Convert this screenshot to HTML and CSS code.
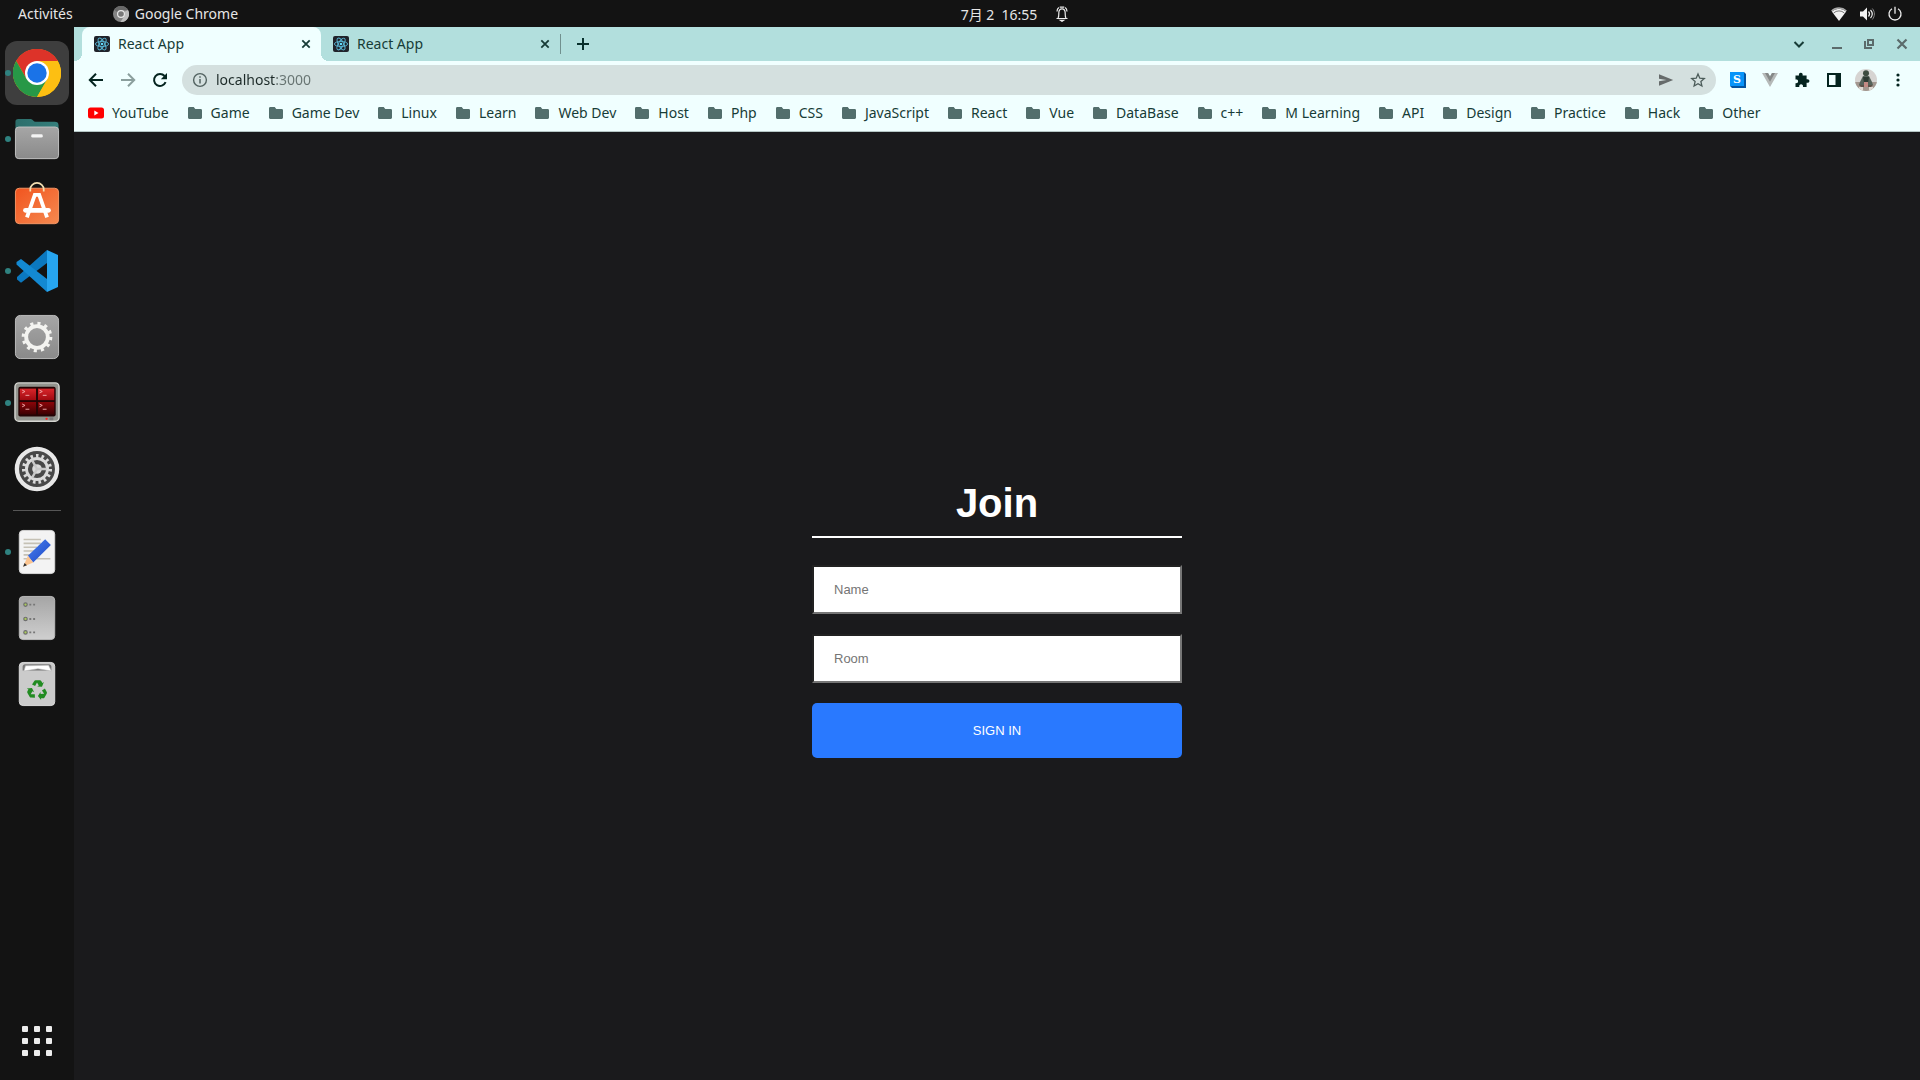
FILE: index.html
```html
<!DOCTYPE html>
<html lang="fr">
<head>
<meta charset="utf-8">
<title>React App</title>
<link rel="stylesheet" href="styles.css">
</head>
<body>
<svg class="defs" aria-hidden="true">
  <defs>
    <linearGradient id="metal" x1="0" y1="0" x2="0" y2="1"><stop offset="0" stop-color="#a6a6a6"/><stop offset="1" stop-color="#8a8a8a"/></linearGradient>
    <linearGradient id="silver" x1="0" y1="0" x2="0" y2="1"><stop offset="0" stop-color="#a5a5a5"/><stop offset="1" stop-color="#cfcfcf"/></linearGradient>
    <linearGradient id="teal" x1="0" y1="0" x2="1" y2="0"><stop offset="0" stop-color="#2c6e6b"/><stop offset="1" stop-color="#357f7c"/></linearGradient>
    <linearGradient id="orange" x1="0" y1="0" x2="1" y2="1"><stop offset="0" stop-color="#f1541f"/><stop offset="1" stop-color="#f58a50"/></linearGradient>
    <linearGradient id="red" x1="0" y1="0" x2="0" y2="1"><stop offset="0" stop-color="#d9262b"/><stop offset="1" stop-color="#a00a10"/></linearGradient>
    <linearGradient id="red-dark" x1="0" y1="0" x2="0" y2="1"><stop offset="0" stop-color="#8c0509"/><stop offset="1" stop-color="#3c0002"/></linearGradient>
    <linearGradient id="pencil" x1="0" y1="0" x2="1" y2="1"><stop offset="0" stop-color="#4a80f0"/><stop offset="1" stop-color="#1c48c4"/></linearGradient>
  </defs>
  <symbol id="react" viewBox="0 0 16 16">
    <rect width="16" height="16" rx="2" fill="#20232a"/>
    <g fill="none" stroke="#5ab8d6" stroke-width=".9"><ellipse cx="8" cy="8" rx="6.6" ry="2.6"/><ellipse cx="8" cy="8" rx="6.6" ry="2.6" transform="rotate(60 8 8)"/><ellipse cx="8" cy="8" rx="6.6" ry="2.6" transform="rotate(120 8 8)"/></g>
    <circle cx="8" cy="8" r="1.3" fill="#61dafb"/>
  </symbol>
  <symbol id="cross" viewBox="0 0 16 16"><path d="M4.3 4.3l7.4 7.4M11.7 4.3l-7.4 7.4" fill="none" stroke="currentColor" stroke-width="1.8"/></symbol>
  <symbol id="folder" viewBox="0 0 16 16"><path d="M1 3.5C1 2.7 1.5 2 2.3 2h4.4l1.6 2h5.4c.8 0 1.3.6 1.3 1.400v7.200c0 .8-.5 1.400-1.300 1.400H2.300C1.500 14 1 13.400 1 12.600z" fill="#526e6c"/></symbol>
</svg>

<header class="topbar">
  <div class="topbar-left">
    <button class="plain" type="button">Activités</button>
    <button class="plain app-name" type="button">
      <svg width="16" height="16" viewBox="0 0 16 16"><circle cx="8" cy="8" r="8" fill="#858585"/><path d="M8 0a8 8 0 0 1 7 4H8a4 4 0 0 0-3.600 2.200L1.200 3.800A8 8 0 0 1 8 0z" fill="#696969"/><path d="M15 4a8 8 0 0 1-7.500 12l3.800-6a4 4 0 0 0 .2-4.200z" fill="#bdbdbd"/><circle cx="8" cy="8" r="4" fill="#e8e8e8"/><circle cx="8" cy="8" r="2.800" fill="#777"/></svg>
      Google Chrome
    </button>
  </div>
  <button class="plain clock" type="button">
    <time>7月 2&nbsp; 16:55</time>
    <svg width="16" height="16" viewBox="0 0 16 16" fill="none" stroke="#eee" stroke-width="1.200"><path d="M2.500 12.500h11M4 12c1-1.200.8-3 .8-5C4.800 4.500 6 2.800 8 2.800S11.200 4.500 11.200 7c0 2-.2 3.800.8 5"/><path d="M4.800 1.500C3.500 2.500 3 4 3 5.500M11.200 1.500C12.500 2.500 13 4 13 5.500M5.700 1.200h4.600"/><path d="M6.500 14.300h3l-1.500 1z" fill="#eee"/></svg>
  </button>
  <div class="topbar-right">
    <svg width="16" height="16" viewBox="0 0 16 16"><path d="M8 15L.8 5.600a10.500 10.500 0 0 1 14.400 0z" fill="#f2f2f2"/><path d="M.6 4.900a10.800 10.800 0 0 1 14.800 0" fill="none" stroke="#aaa" stroke-width="1.400"/><path d="M2.600 7a8 8 0 0 1 10.800 0" fill="none" stroke="#222" stroke-width=".6"/></svg>
    <svg width="16" height="16" viewBox="0 0 16 16" fill="none" stroke="#eee"><path d="M1 5.500h3L8 1.500v13l-4-4H1z" fill="#f2f2f2" stroke="none"/><path d="M9.500 5.500c1.300 1.500 1.300 3.500 0 5M11.500 4c2.200 2.500 2.200 5.500 0 8" stroke-width="1.200"/><path d="M13.300 2.500c2.800 3.300 2.800 7.700 0 11" stroke="#888"/></svg>
    <svg width="16" height="16" viewBox="0 0 16 16" fill="none" stroke="#eee" stroke-width="1.300"><path d="M5 2.800a6 6 0 1 0 6 0M8 .8v7"/></svg>
  </div>
</header>

<div class="desktop">
  <nav class="dock" aria-label="Dock">
    <button class="dock-item running active" type="button" aria-label="Google Chrome">
      <svg width="48" height="48" viewBox="0 0 48 48"><circle cx="24" cy="24" r="24" fill="#fbbc05"/><path d="M24 24L3.200 12A24 24 0 0 1 44.800 12z" fill="#dd3329"/><path d="M24 12h20.800A24 24 0 0 0 3.200 12l10.400 18z" fill="#dd3329"/><path d="M3.200 12A24 24 0 0 0 24 48l10.400-18H13.600z" fill="#279847"/><path d="M24 48A24 24 0 0 0 44.800 12H24l10.400 18z" fill="#fdbf12"/><circle cx="24" cy="24" r="12" fill="#fff"/><circle cx="24" cy="24" r="9.700" fill="#1a73e8"/></svg>
    </button>
    <button class="dock-item running" type="button" aria-label="Fichiers">
      <svg width="46" height="46" viewBox="0 0 48 48"><path d="M1.500 12V6c0-2 1-3 3-3h13c2 0 3 3 5 3h20c2.500 0 4 1 4 4v8h-45z" fill="url(#teal)"/><rect x="1.500" y="11.500" width="45" height="33" rx="3.500" fill="url(#metal)" stroke="#c3c3c3"/><rect x="18" y="19" width="12" height="3.500" rx="1.500" fill="#f4f4f4"/></svg>
    </button>
    <button class="dock-item" type="button" aria-label="Ubuntu Software">
      <svg width="46" height="46" viewBox="0 1 48 48"><rect x="1.500" y="7.500" width="45" height="37" rx="4" fill="url(#orange)" stroke="#f79665"/><path d="M17 11V8.500a7 6.500 0 0 1 14 0V11" fill="none" stroke="#f4dfb2" stroke-width="1.800"/><path d="M13.500 38L21.700 14.500h4.600l8.200 23.500" fill="none" stroke="#fff" stroke-width="4"/><rect x="9.500" y="28" width="29" height="5" rx="2.500" fill="#fff"/></svg>
    </button>
    <button class="dock-item running" type="button" aria-label="Visual Studio Code">
      <svg width="48" height="48" viewBox="0 0 48 48"><path d="M34 3L4 30v2.500l4 3.200L34 16z" fill="#0b78bf"/><path d="M34 45L3.500 17.500V15L8 12l26 20z" fill="#1389d2"/><path d="M34 3l11 5v32l-11 5z" fill="#27a5ef"/></svg>
    </button>
    <button class="dock-item" type="button" aria-label="Paramètres">
      <svg width="46" height="46" viewBox="0 0 48 48"><rect x="1.500" y="1.500" width="45" height="45" rx="5" fill="url(#metal)" stroke="#bdbdbd"/><circle cx="24" cy="24" r="11.300" fill="none" stroke="#f3f3f0" stroke-width="4"/><circle cx="24" cy="24" r="14" fill="none" stroke="#f3f3f0" stroke-width="4" stroke-dasharray="3.200 4.130"/></svg>
    </button>
    <button class="dock-item running" type="button" aria-label="Terminator">
      <svg width="46" height="46" viewBox="0 1 48 48"><rect x="1" y="4" width="46" height="40" rx="4" fill="#92948e" stroke="#d5d6d1" stroke-width="1.500"/><rect x="4.500" y="8" width="39" height="31" rx="2" fill="#240405"/><g fill="url(#red)"><rect x="6" y="10" width="17" height="12"/><rect x="25" y="10" width="17" height="12"/></g><g fill="url(#red-dark)"><rect x="6" y="24" width="17" height="13"/><rect x="25" y="24" width="17" height="13"/></g><path d="M8.500 11.500l3 1.500-3 1.500M12 17h4M26.500 11.500l3 1.500-3 1.500M30 17h4M8.500 26l3 1.500-3 1.500M12 31.500h4M26.500 26l3 1.500-3 1.500M30 31.500h4" fill="none" stroke="#f0a8a8"/><circle cx="34" cy="41.500" r="1.200" fill="#f22"/><rect x="37" y="40" width="4" height="3" fill="#777"/></svg>
    </button>
    <button class="dock-item" type="button" aria-label="Configuration">
      <svg width="46" height="46" viewBox="0 0 48 48"><circle cx="24" cy="24" r="21" fill="#484848" stroke="#e8e8e8" stroke-width="4.500"/><circle cx="24" cy="24" r="11" fill="none" stroke="#dadada" stroke-width="3"/><circle cx="24" cy="24" r="13.700" fill="none" stroke="#dadada" stroke-width="4" stroke-dasharray="2.600 3.137"/><circle cx="24" cy="24" r="5" fill="#dadada"/><path d="M24 24h10M24 24l-5-9M24 24l-5 9" stroke="#c8c8c8" stroke-width="2.500"/></svg>
    </button>
    <hr class="dock-rule">
    <button class="dock-item running" type="button" aria-label="Éditeur de texte">
      <svg width="46" height="46" viewBox="0 0 48 48"><rect x="5.500" y="1.500" width="37" height="45" rx="4" fill="#f3f3f3" stroke="#d8d8d8"/><path d="M10 11h18M10 15h18M10 19h14M10 23h13M10 27h10M10 31h28" stroke="#c5c1b5" stroke-width="1.600"/><path d="M14.500 28L32.500 10.800l6 6L20 35z" fill="url(#pencil)"/><path d="M14.500 28l5.500 7-10.500 4.500z" fill="#fbc490"/><path d="M11 35.500l2.500 2.300-4 1.700z" fill="#333"/></svg>
    </button>
    <button class="dock-item" type="button" aria-label="Serveur">
      <svg width="46" height="46" viewBox="0 0 48 48"><rect x="5.500" y="1.500" width="37" height="45" rx="4" fill="url(#silver)" stroke="#bbb"/><g fill="#aacb5a" stroke="#6e6e6e" stroke-width="1.200"><circle cx="12" cy="10" r="1.800"/><circle cx="12" cy="25" r="1.800"/><circle cx="12" cy="39" r="1.800"/></g><path d="M16 10h2m2 0h2M16 25h2m2 0h2M16 39h2m2 0h2" stroke="#777" stroke-width="2"/></svg>
    </button>
    <button class="dock-item" type="button" aria-label="Corbeille">
      <svg width="46" height="46" viewBox="0 0 48 48"><rect x="5.500" y="1.500" width="37" height="45" rx="4" fill="#cbcbcb" stroke="#ddd"/><path d="M9 10V6c0-1.500 1-2.500 2.500-2.500h25C38 3.500 39 4.500 39 6v4z" fill="#777"/><path d="M10.500 10.500l1.500-5.500 24-.5 3 6-14-2.500z" fill="#fff" stroke="#bbb" stroke-width=".6"/><g fill="#218b21"><g id="arm"><path d="M18.800 24.500l2.200-3.500c.4-.6.800-.8 1.500-.8h4.500c.7 0 1.200.3 1.600 1l1 1.700 1.600-1-2 5-5-.2 1.700-1.100-1.900-3.200-2 3.800z"/></g><use href="#arm" transform="rotate(120 24.300 30.500)"/><use href="#arm" transform="rotate(240 24.300 30.500)"/></g></svg>
    </button>
    <button class="dock-item dock-apps" type="button" aria-label="Afficher les applications">
      <svg width="48" height="48" viewBox="0 0 48 48" fill="#ededed"><g id="row"><rect x="9" y="9" width="6" height="6" rx="1"/><rect x="21" y="9" width="6" height="6" rx="1"/><rect x="33" y="9" width="6" height="6" rx="1"/></g><use href="#row" y="12"/><use href="#row" y="24"/></svg>
    </button>
  </nav>

  <div class="window">
    <div class="tabstrip">
      <div class="tab selected"><svg width="16" height="16"><use href="#react"/></svg><span class="tab-title">React App</span><button class="plain" type="button" aria-label="Fermer"><svg width="16" height="16"><use href="#cross"/></svg></button></div>
      <div class="tab"><svg width="16" height="16"><use href="#react"/></svg><span class="tab-title">React App</span><button class="plain" type="button" aria-label="Fermer"><svg width="16" height="16"><use href="#cross"/></svg></button></div>
      <button class="plain new-tab" type="button" aria-label="Nouvel onglet"><svg width="16" height="16" viewBox="0 0 16 16"><path d="M8 2v12M2 8h12" stroke="#08302c" stroke-width="2"/></svg></button>
      <div class="window-controls">
        <button class="plain dark" type="button" aria-label="Rechercher dans les onglets"><svg width="16" height="16" viewBox="0 0 16 16"><path d="M3.500 6L8 10.500 12.500 6" fill="none" stroke="currentColor" stroke-width="2"/></svg></button>
        <button class="plain" type="button" aria-label="Réduire"><svg width="16" height="16" viewBox="0 0 16 16"><path d="M2 12h10" stroke="currentColor" stroke-width="2"/></svg></button>
        <button class="plain" type="button" aria-label="Restaurer"><svg width="16" height="16" viewBox="0 0 16 16"><path d="M6 4h5v5H6zM3 5v7h7" fill="none" stroke="currentColor" stroke-width="2"/></svg></button>
        <button class="plain" type="button" aria-label="Fermer la fenêtre"><svg width="16" height="16" viewBox="0 0 16 16"><path d="M3.500 3.500l9 9M12.500 3.500l-9 9" stroke="currentColor" stroke-width="2.200"/></svg></button>
      </div>
    </div>

    <div class="toolbar">
      <div class="tools">
        <button class="plain" type="button" aria-label="Précédent"><svg width="16" height="16" viewBox="0 0 16 16"><path d="M15 8H2.500M8 1.800L1.800 8 8 14.200" fill="none" stroke="#04241f" stroke-width="2"/></svg></button>
        <button class="plain" type="button" aria-label="Suivant"><svg width="16" height="16" viewBox="0 0 16 16"><path d="M1 8h12.500M8 1.800L14.200 8 8 14.200" fill="none" stroke="#8b9f9d" stroke-width="2"/></svg></button>
        <button class="plain" type="button" aria-label="Actualiser"><svg width="16" height="16" viewBox="0 0 16 16"><path d="M13.600 10.200A6 6 0 1 1 12.600 4" fill="none" stroke="#04241f" stroke-width="2"/><path d="M15 1v6.200H8.800z" fill="#04241f"/></svg></button>
      </div>
      <div class="omnibox">
        <svg width="16" height="16" viewBox="0 0 16 16"><circle cx="8" cy="8" r="6.400" fill="none" stroke="#526260" stroke-width="1.400"/><path d="M8 7v4.500M8 4.300v1.500" stroke="#526260" stroke-width="1.500"/></svg>
        <input class="url" type="text" value="localhost:3000" aria-label="Adresse">
        <button class="plain" type="button" aria-label="Partager"><svg width="16" height="16" viewBox="0 0 16 16"><path d="M1 2.200L15.200 8 1 13.800V9.200L8.500 8 1 6.800z" fill="#666b6b"/></svg></button>
        <button class="plain" type="button" aria-label="Ajouter aux favoris"><svg width="16" height="16" viewBox="0 0 16 16"><path d="M8 2l1.800 4.200 4.500.4-3.400 3 1 4.400L8 11.700 4.100 14l1-4.400-3.400-3 4.500-.4z" fill="none" stroke="#4b5b59" stroke-width="1.300"/></svg></button>
      </div>
      <div class="tools">
        <button class="plain" type="button" aria-label="Extension S"><svg width="16" height="16" viewBox="0 0 16 16"><path d="M2 2l12-2 2 2v14H2l-2-2z" fill="#0454a0"/><path d="M0 0h14v14H0z" fill="#0894f9"/><text class="badge-letter" x="7" y="11" text-anchor="middle">S</text></svg></button>
        <button class="plain" type="button" aria-label="Vue.js devtools"><svg width="16" height="16" viewBox="0 0 16 16"><path d="M0 1h6l2 3.400L10 1h6L8 15z" fill="#b5b9b8"/><path d="M3 1h3l2 3.400L10 1h3L8 9.800z" fill="#858988"/></svg></button>
        <button class="plain" type="button" aria-label="Extensions"><svg width="16" height="16" viewBox="0 0 16 16"><path d="M1.500 3.500H5C4.600 1.800 5.400.8 6.800.8S9 1.800 8.600 3.500h4v3.800c1.800-.4 2.800.4 2.800 1.700s-1 2.100-2.800 1.700V15H9c.3-1.800-.6-2.700-1.900-2.700S5 13.200 5.300 15H1.500v-3.800c1.800.2 2.600-.6 2.600-1.900S3.300 7.300 1.500 7.500z" fill="#04241f"/></svg></button>
        <button class="plain" type="button" aria-label="Panneau latéral"><svg width="16" height="16" viewBox="0 0 16 16"><path d="M1 1h14v14H1zM3 3v10h6.500V3z" fill="#04241f" fill-rule="evenodd"/></svg></button>
        <button class="plain" type="button" aria-label="Profil"><svg class="avatar" width="22" height="22" viewBox="0 0 22 22"><rect width="22" height="22" fill="#d6d4d2"/><path d="M0 13h22v9H0z" fill="#a2978f"/><circle cx="11" cy="4.300" r="3" fill="#3e4c40"/><path d="M8 7h6l3 6 1 3H4l1-3z" fill="#56625a"/><path d="M8 8h6l-1 6H9z" fill="#2e3b33"/><path d="M4 16h14l-2 2H6z" fill="#5b5148"/><path d="M9 13h4v5H9z" fill="#c38a84"/><path d="M4 18h4v4H4zM14 18h4v4h-4z" fill="#ded8d2"/></svg></button>
        <button class="plain" type="button" aria-label="Menu"><svg width="16" height="16" viewBox="0 0 16 16" fill="#04241f"><circle cx="8" cy="3" r="1.600"/><circle cx="8" cy="8" r="1.600"/><circle cx="8" cy="13" r="1.600"/></svg></button>
      </div>
    </div>

    <nav class="bookmarks" aria-label="Favoris">
      <a href="#"><svg width="16" height="16" viewBox="0 0 16 16"><rect y="2.500" width="16" height="11" rx="2.500" fill="#f00"/><path d="M6.300 5.600v4.800L10.500 8z" fill="#fff"/></svg>YouTube</a>
      <a href="#"><svg width="16" height="16"><use href="#folder"/></svg>Game</a>
      <a href="#"><svg width="16" height="16"><use href="#folder"/></svg>Game Dev</a>
      <a href="#"><svg width="16" height="16"><use href="#folder"/></svg>Linux</a>
      <a href="#"><svg width="16" height="16"><use href="#folder"/></svg>Learn</a>
      <a href="#"><svg width="16" height="16"><use href="#folder"/></svg>Web Dev</a>
      <a href="#"><svg width="16" height="16"><use href="#folder"/></svg>Host</a>
      <a href="#"><svg width="16" height="16"><use href="#folder"/></svg>Php</a>
      <a href="#"><svg width="16" height="16"><use href="#folder"/></svg>CSS</a>
      <a href="#"><svg width="16" height="16"><use href="#folder"/></svg>JavaScript</a>
      <a href="#"><svg width="16" height="16"><use href="#folder"/></svg>React</a>
      <a href="#"><svg width="16" height="16"><use href="#folder"/></svg>Vue</a>
      <a href="#"><svg width="16" height="16"><use href="#folder"/></svg>DataBase</a>
      <a href="#"><svg width="16" height="16"><use href="#folder"/></svg>c++</a>
      <a href="#"><svg width="16" height="16"><use href="#folder"/></svg>M Learning</a>
      <a href="#"><svg width="16" height="16"><use href="#folder"/></svg>API</a>
      <a href="#"><svg width="16" height="16"><use href="#folder"/></svg>Design</a>
      <a href="#"><svg width="16" height="16"><use href="#folder"/></svg>Practice</a>
      <a href="#"><svg width="16" height="16"><use href="#folder"/></svg>Hack</a>
      <a href="#"><svg width="16" height="16"><use href="#folder"/></svg>Other</a>
    </nav>

    <main class="page">
      <form class="join">
        <h1>Join</h1>
        <input type="text" placeholder="Name" aria-label="Name">
        <input type="text" placeholder="Room" aria-label="Room">
        <button type="submit">SIGN IN</button>
      </form>
    </main>
  </div>
</div>
</body>
</html>
```
FILE: styles.css
```css
* {
  box-sizing: border-box;
}

body {
  margin: 0;
  min-height: 100vh;
  display: flex;
  flex-direction: column;
  background: #131313;
  font: 14px/20px "Noto Sans", "Noto Sans CJK JP", sans-serif;
}

svg {
  display: block;
  flex: none;
}

.defs {
  position: absolute;
  width: 0;
  height: 0;
}

.plain {
  display: flex;
  align-items: center;
  justify-content: center;
  padding: 0;
  border: 0;
  background: none;
  color: inherit;
  font: inherit;
}

/* System bar */
.topbar {
  display: grid;
  grid-template-columns: 1fr auto 1fr;
  align-items: center;
  height: 27px;
  padding: 0 17px 0 18px;
  color: #e6e6e6;
}

.topbar-left {
  display: flex;
  gap: 40px;
}

.app-name {
  gap: 6px;
}

.clock {
  gap: 17px;
  padding-left: 110px;
}

.clock time {
  padding-top: 2px;
}

.topbar-right {
  display: flex;
  justify-content: flex-end;
  gap: 12px;
}

.desktop {
  flex: 1;
  display: flex;
}

/* Dock */
.dock {
  width: 74px;
  flex: none;
  display: flex;
  flex-direction: column;
  align-items: center;
  gap: 2px;
  padding: 14px 5px 7px;
}

.dock-item {
  position: relative;
  display: flex;
  align-items: center;
  justify-content: center;
  width: 64px;
  height: 64px;
  padding: 0;
  border: 0;
  border-radius: 12px;
  background: none;
}

.dock-item.active {
  background: #3e3e3e;
}

.dock-item.running::before {
  content: "";
  position: absolute;
  left: 0;
  width: 6px;
  height: 6px;
  border-radius: 50%;
  background: #2f8280;
}

.dock-rule {
  width: 48px;
  height: 1px;
  margin: 7px 0;
  border: 0;
  background: #565656;
}

.dock-apps {
  margin-top: auto;
}

/* Browser window */
.window {
  flex: 1;
  min-width: 0;
  display: flex;
  flex-direction: column;
  background: #f0ffff;
  color: #173c37;
}

.tabstrip {
  display: flex;
  height: 34px;
  padding: 0 10px 0 8px;
  background: #b2dfdd;
}

.tab {
  position: relative;
  display: flex;
  align-items: center;
  gap: 8px;
  width: 239px;
  padding: 0 7px 0 12px;
}

.tab-title {
  flex: 1;
}

.tab.selected {
  border-radius: 8px 8px 0 0;
  background: #f0ffff;
}

.tab.selected::before,
.tab.selected::after {
  content: "";
  position: absolute;
  bottom: 0;
  width: 8px;
  height: 8px;
}

.tab.selected::before {
  right: 100%;
  background: radial-gradient(circle at 0 0, #b2dfdd 8px, #f0ffff 8px);
}

.tab.selected::after {
  left: 100%;
  background: radial-gradient(circle at 100% 0, #b2dfdd 8px, #f0ffff 8px);
}

.new-tab {
  align-self: center;
  height: 20px;
  padding-left: 14px;
  border-left: 1px solid #71908e;
}

.window-controls {
  display: flex;
  gap: 16px;
  margin-left: auto;
  color: #5b6b6b;
}

.window-controls .dark {
  margin-right: 7px;
  color: #173c37;
}

.toolbar {
  display: flex;
  align-items: center;
  gap: 6px;
  padding: 4px 6px 0;
}

.tools {
  display: flex;
}

.tools .plain {
  width: 32px;
  height: 30px;
}

.badge-letter {
  fill: #fff;
  font: bold 11px "DejaVu Serif", serif;
}

.avatar {
  border-radius: 50%;
}

.omnibox {
  flex: 1;
  display: flex;
  align-items: center;
  height: 30px;
  padding: 0 2px 0 10px;
  border-radius: 15px;
  background: #d4e0df;
}

.omnibox .plain {
  width: 32px;
}

.url {
  flex: 1;
  min-width: 0;
  padding: 0 8px;
  border: 0;
  outline: 0;
  /* host in dark, port in grey */
  background: linear-gradient(90deg, #1c2a28 68px, #667371 68px);
  -webkit-background-clip: text;
  background-clip: text;
  color: transparent;
  font: inherit;
}

.bookmarks {
  display: flex;
  align-items: center;
  gap: 18px;
  height: 37px;
  padding: 0 14px;
  border-bottom: 1px solid #b5c6c5;
  white-space: nowrap;
}

.bookmarks a {
  display: flex;
  align-items: center;
  gap: 8px;
  color: inherit;
  text-decoration: none;
}

/* Join page */
.page {
  flex: 1;
  display: flex;
  align-items: center;
  justify-content: center;
  background: #1a1a1c;
  font-family: "Liberation Sans", Arial, sans-serif;
}

.join {
  display: flex;
  flex-direction: column;
  gap: 20px;
  width: 20%;
  min-width: 370px;
}

.join h1 {
  margin: 25px 0 7px;
  padding-bottom: 10px;
  border-bottom: 2px solid #fff;
  color: #fff;
  font-size: 40px;
  line-height: 46px;
  text-align: center;
}

.join input {
  padding: 15px 20px;
  border: 2px solid;
  border-color: #212121 #767676 #767676 #212121;
  background: #fff;
  font: 13px/15px "Liberation Sans", Arial, sans-serif;
}

.join input::placeholder {
  color: #757575;
}

.join button {
  padding: 20px;
  border: 0;
  border-radius: 5px;
  background: #2979ff;
  color: #fff;
  font: 13px/15px "Liberation Sans", Arial, sans-serif;
}
```
